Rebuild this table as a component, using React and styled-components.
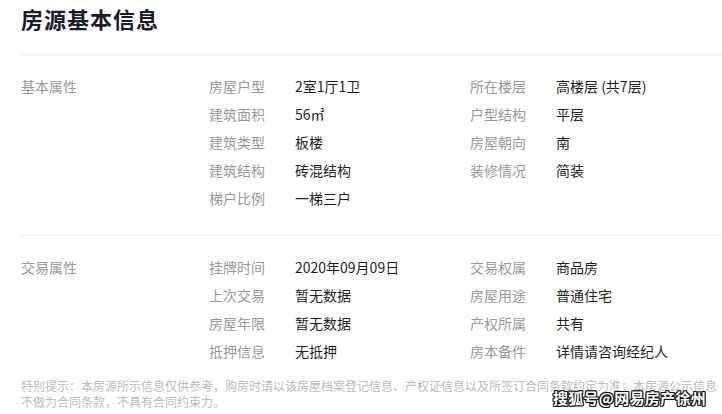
import React from "react";
import styled, { createGlobalStyle } from "styled-components";

const Global = createGlobalStyle`
  html, body { margin: 0; padding: 0; background: #fff; overflow: hidden; }
  body { font-family: "Noto Sans CJK SC", "Noto Sans", sans-serif; }
`;

const Page = styled.div`
  position: relative;
  width: 722px;
  height: 414px;
  overflow: hidden;
`;

const Inner = styled.div`
  width: 760px;
  padding-left: 21px;
  box-sizing: border-box;
`;

const Title = styled.h1`
  margin: 0 0 18px;
  font-size: 22px;
  line-height: 36px;
  font-weight: 700;
  color: #161c2d;
  letter-spacing: 1px;
`;

const Section = styled.section`
  display: grid;
  grid-template-columns: 188px 1fr;
  border-top: 1px solid #ececec;
  padding: ${(p) => p.$pt}px 0 ${(p) => p.$pb}px;
`;

const SectionLabel = styled.div`
  font-size: 14px;
  line-height: 28px;
  color: #999;
`;

const Grid = styled.div`
  display: grid;
  grid-template-columns: 86px 175px 86px 1fr;
  grid-auto-rows: 28px;
  align-items: center;
`;

const Label = styled.span`
  font-size: 14px;
  color: #999;
  white-space: nowrap;
`;

const Value = styled.span`
  font-size: 14px;
  color: #1f1f1f;
  white-space: nowrap;
`;

const Note = styled.p`
  margin: 0;
  padding-top: 13px;
  font-size: 12px;
  line-height: 16px;
  color: #bcbcbc;
  white-space: nowrap;
`;

const Watermark = styled.div`
  position: absolute;
  right: 16px;
  bottom: 6px;
  font-size: 15px;
  font-weight: 700;
  color: #fff;
  letter-spacing: 0.3px;
  text-shadow: -1px -1px 0 #111, 1px -1px 0 #111, -1px 1px 0 #111, 1px 1px 0 #111,
    0 1px 0 #111, 0 -1px 0 #111, 1px 0 0 #111, -1px 0 0 #111;
`;

const basic = [
  ["房屋户型", "2室1厅1卫", "所在楼层", "高楼层 (共7层)"],
  ["建筑面积", "56㎡", "户型结构", "平层"],
  ["建筑类型", "板楼", "房屋朝向", "南"],
  ["建筑结构", "砖混结构", "装修情况", "简装"],
  ["梯户比例", "一梯三户"],
];

const trade = [
  ["挂牌时间", "2020年09月09日", "交易权属", "商品房"],
  ["上次交易", "暂无数据", "房屋用途", "普通住宅"],
  ["房屋年限", "暂无数据", "产权所属", "共有"],
  ["抵押信息", "无抵押", "房本备件", "详情请咨询经纪人"],
];

function Rows({ data }) {
  return (
    <Grid>
      {data.map((r, i) => (
        <React.Fragment key={i}>
          <Label>{r[0]}</Label>
          <Value>{r[1]}</Value>
          <Label>{r[2] || ""}</Label>
          <Value>{r[3] || ""}</Value>
        </React.Fragment>
      ))}
    </Grid>
  );
}

export default function App() {
  return (
    <Page>
      <Global />
      <Inner>
        <Title>房源基本信息</Title>
        <Section $pt={17} $pb={23}>
          <SectionLabel>基本属性</SectionLabel>
          <Rows data={basic} />
        </Section>
        <Section $pt={17} $pb={0}>
          <SectionLabel>交易属性</SectionLabel>
          <Rows data={trade} />
        </Section>
        <Note>
          特别提示：本房源所示信息仅供参考，购房时请以该房屋档案登记信息、产权证信息以及所签订合同条款约定为准；本房源公示信息
          <br />
          不做为合同条款，不具有合同约束力。
        </Note>
      </Inner>
      <Watermark>搜狐号@网易房产徐州</Watermark>
    </Page>
  );
}
